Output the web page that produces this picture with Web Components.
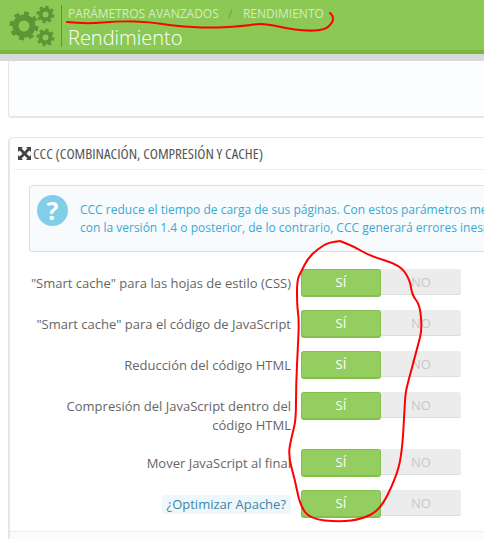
<!doctype html>
<html lang="es"><head><meta charset="utf-8">
<style>
html,body{margin:0;height:539px;overflow:hidden;background:#fff;font-family:"Open Sans",sans-serif}
body{position:relative}
main{display:block;padding:7px 0 0 8px;width:1100px}
</style></head><body>
<page-header crumb1="Parámetros avanzados" crumb2="Rendimiento" title="Rendimiento"></page-header>
<main>
<blank-panel></blank-panel>
<ccc-panel heading="CCC (Combinación, compresión y cache)">
  <info-alert>CCC reduce el tiempo de carga de sus páginas. Con estos parámetros mejora el rendimiento de su tienda.<br>con la versión 1.4 o posterior, de lo contrario, CCC generará errores inesperados en su tienda.</info-alert>
  <switch-row>"Smart cache" para las hojas de estilo (CSS)</switch-row>
  <switch-row>"Smart cache" para el código de JavaScript</switch-row>
  <switch-row>Reducción del código HTML</switch-row>
  <switch-row>Compresión del JavaScript dentro del código HTML</switch-row>
  <switch-row>Mover JavaScript al final</switch-row>
  <switch-row hint>¿Optimizar Apache?</switch-row>
</ccc-panel>
</main>
<red-scribble points="67,22 85,24 120,21 150,22 175,26 210,28 245,26 262,23 285,28 305,31 325,30 333,22 333,16 330,13"></red-scribble>
<red-scribble points="340,241 329,242 318,249 308,258 301,272 297,280 297,305 299,320 298,345 296,385 296,420 292,435 288,455 295,480 300,505 310,519 340,522 362,519 380,510 395,480 402,455 405,400 406,390 410,375 418,345 422,330 420,305 412,295 410,280 400,265 370,256 355,247 340,241"></red-scribble>
<script>
function el(name, html){
  customElements.define(name, class extends HTMLElement{
    connectedCallback(){
      if(this.shadowRoot) return;
      const s=this.attachShadow({mode:'open'});
      s.innerHTML=typeof html==='function'?html(this):html;
    }
  });
}
const gear=(cx,cy,r,w)=>`<circle cx="${cx}" cy="${cy}" r="${r}" fill="none" stroke="#5d9435" stroke-width="${w}"/>
<circle cx="${cx}" cy="${cy}" r="${r+w*.72}" fill="none" stroke="#5d9435" stroke-width="${w*.55}" pathLength="16" stroke-dasharray="1 1"/>`;
el('page-header',h=>`<style>
:host{display:flex;height:50px;background:#8bc954;border-bottom:4px solid #7cb444;box-shadow:0 7px 0 #d8d9db;color:#fff;position:relative}
svg{flex:none;width:61px;height:50px}
.t{border-left:1px solid #5d9435;margin:5px 0 3px;padding:0 0 0 6px;display:flex;flex-direction:column}
.c{font-size:12px;line-height:16px;text-transform:uppercase;color:#d5ecc0;white-space:nowrap;margin-top:1px}
.c i{font-style:normal;margin:0 7px 0 6.5px;color:#6fa343}
h1{margin:0;font-size:20px;line-height:26px;font-weight:300;white-space:nowrap;margin-top:3px}
</style>
<svg viewBox="0 0 61 50">${gear(24,26,8.5,6)}${gear(45.5,14.5,5,4)}${gear(45.5,37.5,5,4)}</svg>
<div class="t"><div class="c">${h.getAttribute('crumb1')}<i> / </i>${h.getAttribute('crumb2')}</div><h1>${h.getAttribute('title')}</h1></div>`);
el('blank-panel',`<style>:host{display:block;height:55px;background:#fcfdfe;border:1px solid #e6e6e6;border-top:0;border-bottom-width:2px;border-radius:0 0 0 4px;margin-bottom:19px}</style>`);
el('ccc-panel',h=>`<style>
:host{display:block;border:2px solid #e6e6e6;border-width:1px 0 0 2px;border-radius:5px 0 0 0;background:#fff;box-sizing:border-box;height:420px}
header{display:flex;align-items:center;gap:2px;height:31px;margin-left:4px;padding-left:4px;border-bottom:1px solid #eee;font-size:15px;font-stretch:75%;color:#555;text-transform:uppercase;white-space:nowrap}
header span{position:relative;top:-1px;letter-spacing:-.03px}
svg{width:13px;height:13px;flex:none}
.b{padding:15px 0 0 19px}
footer{border-top:1px solid #eee;background:#fafbfc;height:20px}
</style>
<header><svg viewBox="0 0 13 13"><path fill="#444" d="M0 0h5L3.6 1.6 6.5 4.5 9.4 1.6 8 0h5v5l-1.6-1.4-2.9 2.9 2.9 2.9L13 8v5H8l1.4-1.6-2.9-2.9-2.9 2.9L5 13H0V8l1.6 1.4 2.9-2.9-2.9-2.9L0 5z"/></svg><span>${h.getAttribute('heading')}</span></header>
<div class="b"><slot></slot></div><footer></footer>`);
el('info-alert',`<style>
:host{display:flex;align-items:flex-start;height:65px;border:1px solid #c6e6f0;border-radius:3px;background:#f7fbfe;color:#3aa9d0;font-size:12px;line-height:18px;white-space:nowrap;margin-bottom:17px;width:900px}
.q{flex:none;width:31px;height:31px;border-radius:50%;background:#81cee8;color:#fff;font:700 25px/31px "Open Sans",sans-serif;text-align:center;margin:9px 7px 0}
p{margin:15px 0 0 5px}
</style><div class="q">?</div><p><slot></slot></p>`);
el('switch-row',h=>`<style>
:host{display:grid;grid-template-columns:262px 160px;column-gap:10px;margin-bottom:15px;align-items:start}
.l{font-size:13px;line-height:19px;color:#666;text-align:right;padding-top:5px;margin-bottom:-1px}
.l span.hint{display:inline-block;background:#eef7fc;color:#3f84a8;border-radius:3px;padding:0 5px}
.s{display:grid;grid-template-columns:1fr 1fr;height:26px;border-radius:3px;background:#ececec;box-shadow:inset 0 -1px 0 #ddd;font-size:13px;line-height:27px;text-align:center;color:#c8c8c8}
.y{background:#94cd60;color:#fff;border:1px solid #84bf4c;border-bottom-width:2px;border-radius:3px;box-sizing:border-box;line-height:25px}
</style><div class="l">${h.hasAttribute('hint')?'<span class="hint"><slot></slot></span>':'<slot></slot>'}</div><div class="s"><div class="y">SÍ</div><div>NO</div></div>`);
el('red-scribble',h=>{
  const p=h.getAttribute('points').trim().split(/\s+/).map(a=>a.split(',').map(Number));
  let d=`M${p[0][0]} ${p[0][1]}`;
  for(let i=1;i<p.length-1;i++){const m=[(p[i][0]+p[i+1][0])/2,(p[i][1]+p[i+1][1])/2];d+=`Q${p[i][0]} ${p[i][1]} ${m[0]} ${m[1]}`;}
  const l=p[p.length-1];d+=`L${l[0]} ${l[1]}`;
  return `<style>:host{position:absolute;left:0;top:0;width:484px;height:539px;pointer-events:none}svg{display:block}</style>
<svg width="484" height="539" viewBox="0 0 484 539"><path d="${d}" fill="none" stroke="#f00" stroke-width="2" stroke-linecap="round" stroke-linejoin="round"/></svg>`;
});
</script>
</body></html>
